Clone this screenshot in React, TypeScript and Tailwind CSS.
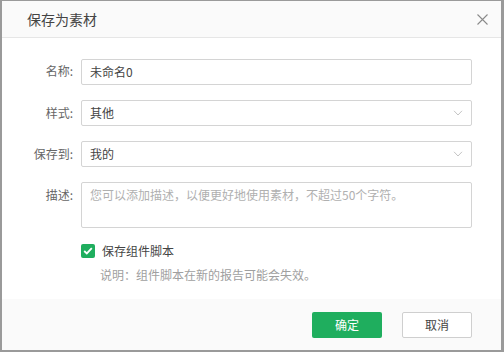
import { useState } from "react";

const FONT = { fontFamily: '"Noto Sans CJK SC", "Noto Sans", sans-serif' };

function Chevron() {
  return (
    <svg width="10" height="6" viewBox="0 0 10 6" className="shrink-0">
      <path d="M1 0.8 L5 5 L9 0.8" fill="none" stroke="#c4c4c4" strokeWidth="1" />
    </svg>
  );
}

function Row({ label, children, top }: { label: string; children: React.ReactNode; top?: boolean }) {
  return (
    <div className={`flex ${top ? "items-start" : "items-center"}`}>
      <div className={`w-[71px] text-right text-[12px] text-[#666] ${top ? "pt-[4px]" : ""}`}>{label}</div>
      <div className="ml-[8px] w-[391px]">{children}</div>
    </div>
  );
}

function Select({ value }: { value: string }) {
  return (
    <div className="h-[26px] border border-[#d4d4d4] rounded-[2px] flex items-center justify-between pl-[8px] pr-[8px] text-[12px] text-[#444]">
      <span>{value}</span>
      <Chevron />
    </div>
  );
}

export default function App() {
  const [name, setName] = useState("未命名0");
  const [checked, setChecked] = useState(true);

  return (
    <div
      style={FONT}
      className="w-[504px] h-[352px] border-l-2 border-r-[3px] border-t border-b-2 border-[#9a9a9a] bg-white flex flex-col"
    >
      {/* header */}
      <div className="h-[37px] shrink-0 bg-[#fafafa] border-b border-[#e6e6e6] flex items-center justify-between pl-[25px] pr-[13px]">
        <span className="text-[14px] text-[#444]">保存为素材</span>
        <svg width="11" height="11" viewBox="0 0 11 11">
          <path d="M0.5 0.5 L10.5 10.5 M10.5 0.5 L0.5 10.5" stroke="#8a8a8a" strokeWidth="1.1" />
        </svg>
      </div>

      {/* body */}
      <div className="h-[261px] shrink-0 pt-[20px] flex flex-col gap-[15px]">
        <Row label="名称:">
          <input
            value={name}
            onChange={(e) => setName(e.target.value)}
            className="w-full h-[26px] border border-[#d4d4d4] rounded-[2px] px-[8px] text-[12px] text-[#444] outline-none"
          />
        </Row>
        <Row label="样式:">
          <Select value="其他" />
        </Row>
        <Row label="保存到:">
          <Select value="我的" />
        </Row>
        <Row label="描述:" top>
          <div className="h-[46px] border border-[#d4d4d4] rounded-[2px] px-[8px] pt-[3px] text-[12px] text-[#b0b0b0]">
            您可以添加描述，以便更好地使用素材，不超过50个字符。
          </div>
        </Row>

        <div className="ml-[79px] flex flex-col">
          <label className="flex items-center h-[14px] mt-[1px] cursor-pointer" onClick={() => setChecked(!checked)}>
            <span className={`w-[14px] h-[14px] rounded-[2px] flex items-center justify-center ${checked ? "bg-[#1fae5e]" : "border border-[#ccc]"}`}>
              {checked && (
                <svg width="10" height="8" viewBox="0 0 10 8">
                  <path d="M1.2 4 L3.8 6.4 L8.8 1.2" fill="none" stroke="white" strokeWidth="1.8" />
                </svg>
              )}
            </span>
            <span className="ml-[7px] text-[12px] text-[#444]">保存组件脚本</span>
          </label>
          <div className="mt-[8px] ml-[19px] text-[12px] text-[#a0a0a0]">说明：组件脚本在新的报告可能会失效。</div>
        </div>
      </div>

      {/* footer */}
      <div className="flex-1 bg-[#fafafa] flex items-start justify-end gap-[20px] pt-[13px] pr-[29px]">
        <button className="w-[70px] h-[26px] rounded-[2px] bg-[#1fae5e] text-white text-[12px]">确定</button>
        <button className="w-[70px] h-[26px] rounded-[2px] bg-white border border-[#cfcfcf] text-[#444] text-[12px]">取消</button>
      </div>
    </div>
  );
}
